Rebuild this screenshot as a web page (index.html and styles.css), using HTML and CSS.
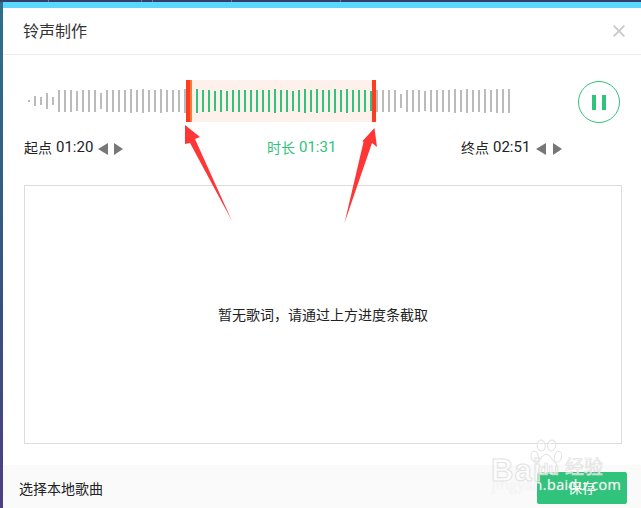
FILE: index.html
```html
<!DOCTYPE html>
<html lang="zh">
<head>
<meta charset="utf-8">
<title>铃声制作</title>
<link rel="stylesheet" href="styles.css">
</head>
<body>
<div class="topline"><i class="tick t1"></i><i class="tick t2"></i><i class="tick t3"></i><i class="tick t4"></i><i class="tick t5"></i></div>
<div class="shell">
  <div class="cyan"></div>
  <main class="dialog">
    <header class="head">
      <h1 class="title">铃声制作</h1>
      <svg class="close" width="12" height="12" viewBox="0 0 12 12"><path d="M.7.7l10.6 10.6M11.3.7L.7 11.3" stroke="#c9c9c9" stroke-width="1.8" fill="none"/></svg>
    </header>
    <section class="player">
      <div class="wave">
        <div class="bars">
          <i class="b h2"></i><i class="b h10"></i><i class="b h8"></i><i class="b h16"></i><i class="b h8"></i><i class="b h22"></i><i class="b h22"></i><i class="b h22"></i><i class="b h20"></i><i class="b h22"></i><i class="b h22"></i><i class="b h22"></i><i class="b h16"></i><i class="b h22"></i><i class="b h22"></i><i class="b h22"></i><i class="b h22"></i><i class="b h24"></i><i class="b h22"></i><i class="b h24"></i><i class="b h22"></i><i class="b h22"></i><i class="b h24"></i><i class="b h22"></i><i class="b h22"></i><i class="b h22"></i><i class="b h24"></i>
        </div>
        <div class="marker start"></div>
        <div class="sel bars">
          <i class="b h24"></i><i class="b h22"></i><i class="b h22"></i><i class="b h20"></i><i class="b h22"></i><i class="b h20"></i><i class="b h22"></i><i class="b h22"></i><i class="b h22"></i><i class="b h22"></i><i class="b h22"></i><i class="b h22"></i><i class="b h22"></i><i class="b h24"></i><i class="b h22"></i><i class="b h22"></i><i class="b h20"></i><i class="b h22"></i><i class="b h24"></i><i class="b h22"></i><i class="b h24"></i><i class="b h22"></i><i class="b h22"></i><i class="b h24"></i><i class="b h22"></i><i class="b h24"></i><i class="b h22"></i><i class="b h22"></i><i class="b h22"></i><i class="b h20"></i>
        </div>
        <div class="marker end"></div>
        <div class="bars">
          <i class="b h22"></i><i class="b h22"></i><i class="b h22"></i><i class="b h22"></i><i class="b h14"></i><i class="b h22"></i><i class="b h22"></i><i class="b h22"></i><i class="b h20"></i><i class="b h22"></i><i class="b h22"></i><i class="b h22"></i><i class="b h22"></i><i class="b h24"></i><i class="b h22"></i><i class="b h24"></i><i class="b h22"></i><i class="b h22"></i><i class="b h24"></i><i class="b h22"></i><i class="b h24"></i><i class="b h24"></i><i class="b h24"></i>
        </div>
      </div>
      <button class="pause" type="button" aria-label="暂停"><i></i><i></i></button>
    </section>
    <section class="times">
      <div class="time t-start"><span class="cn">起点</span> <span class="num">01:20</span><i class="tri left"></i><i class="tri right"></i></div>
      <div class="time t-dur"><span class="cn">时长</span> <span class="num">01:31</span></div>
      <div class="time t-end"><span class="cn">终点</span> <span class="num">02:51</span><i class="tri left"></i><i class="tri right"></i></div>
    </section>
    <section class="lyrics">暂无歌词，请通过上方进度条截取</section>
    <footer class="foot">
      <span class="local">选择本地歌曲</span>
      <button class="save" type="button">保存</button>
    </footer>
  </main>
</div>
<svg class="arrows" width="641" height="508" viewBox="0 0 641 508">
  <polygon points="185,125 200,137 195,139 232,221 190,143 185,144" fill="#ff3636"/>
  <polygon points="374.5,128 377,147 372,143 344.5,223 363.5,142 362.5,141" fill="#ff3636"/>
</svg>
<div class="mark">
  <svg class="paw" width="32" height="37" viewBox="0 0 40 46" fill="rgba(255,255,255,.3)" stroke="#e2e2e2" stroke-width="1.3">
    <ellipse cx="6" cy="22" rx="4.5" ry="7" transform="rotate(-15 6 22)"/>
    <ellipse cx="14" cy="8" rx="5" ry="7" transform="rotate(-8 14 8)"/>
    <ellipse cx="27" cy="8" rx="5" ry="7" transform="rotate(8 27 8)"/>
    <ellipse cx="35" cy="22" rx="4.5" ry="7" transform="rotate(15 35 22)"/>
    <path d="M20 19c-5 0-6 6-10 10-4 3-4 14 4 14 3 0 4-1 6-1s4 1 7 1c8 0 8-11 4-14-4-4-6-10-11-10z"/>
  </svg>
  <span class="m-bai">Bai</span>
  <span class="m-du">du</span>
  <span class="m-cn">经验</span>
  <span class="m-url">jingyan.baidu.com</span>
</div>
</body>
</html>
```
FILE: styles.css
```css
* { box-sizing: border-box; }
html, body { margin: 0; padding: 0; }
body {
  width: 641px;
  height: 508px;
  overflow: hidden;
  position: relative;
  display: flex;
  flex-direction: column;
  background: linear-gradient(180deg, #2f6f8c 0%, #37527f 60%, #4d3f80 100%);
  font-family: "Noto Sans CJK SC", "Noto Sans", sans-serif;
  font-size: 14px;
  color: #222;
}
.topline { height: 2px; background: #33416a; position: relative; flex: none; }
.tick { position: absolute; top: 0; width: 1px; height: 2px; background: #6b7796; }
.t1 { left: 48px; } .t2 { left: 141px; } .t3 { left: 152px; } .t4 { left: 231px; } .t5 { left: 340px; }
.shell { flex: 1; margin-left: 3px; display: flex; flex-direction: column; min-height: 0; }
.cyan { height: 6px; background: #5ad8ff; flex: none; }
.dialog { flex: 1; background: #fff; display: flex; flex-direction: column; min-height: 0; }

.head {
  height: 47px;
  flex: none;
  border-bottom: 1px solid #ededed;
  display: flex;
  align-items: center;
  justify-content: space-between;
  padding: 0 16px 0 20px;
}
.title { margin: 0 0 2px; font-size: 16px; font-weight: 400; line-height: 44px; color: #333; }
.close { display: block; margin-bottom: 1px; }

.player {
  margin-top: 25px;
  padding: 0 21px 0 25px;
  display: flex;
  justify-content: space-between;
  flex: none;
}
.wave { display: flex; height: 42px; }
.bars { display: flex; align-items: center; gap: 4px; flex: none; }
.b { display: block; width: 2px; background: #bbb; flex: none; }
.h2 { height: 2px; } .h8 { height: 8px; } .h10 { height: 10px; } .h14 { height: 14px; }
.h16 { height: 16px; } .h20 { height: 20px; } .h22 { height: 22px; } .h24 { height: 24px; }
.marker { height: 42px; flex: none; }
.marker.start { width: 6px; background: linear-gradient(90deg, #ff3c1f 0, #ff3c1f 4px, #ff7a35 4px); }
.marker.end { width: 4px; background: #ff3c1f; }
.sel { width: 180px; height: 42px; padding-left: 4px; background: #fef0ea; overflow: hidden; }
.sel .b { background: #31c27c; }
.pause {
  width: 42px;
  height: 42px;
  margin-top: 1px;
  padding: 0;
  border: 1px solid #31c27c;
  border-radius: 50%;
  background: #fff;
  display: flex;
  align-items: center;
  justify-content: center;
  gap: 6px;
}
.pause i { display: block; width: 4px; height: 15px; background: #31c27c; }

.times { margin-top: 13px; padding-left: 21px; height: 22px; display: flex; align-items: center; flex: none; }
.time { display: flex; align-items: center; white-space: pre; line-height: 22px; }
.t-start { width: 243px; }
.t-dur { width: 194px; color: #31c27c; }
.num { font-family: Roboto, "Noto Sans", sans-serif; font-size: 15px; margin-left: 4px; }
.tri { display: block; width: 0; height: 0; border-top: 6.5px solid transparent; border-bottom: 6.5px solid transparent; }
.tri.left { border-right: 10px solid #777; margin-left: 5px; margin-top: 3px; }
.tri.right { border-left: 9px solid #777; margin-left: 7px; margin-top: 3px; }
.t-start .tri.right { margin-left: 6px; }
.t-end .tri.left { margin-left: 6px; }

.lyrics {
  margin: 27px 19px 0 21px;
  height: 259px;
  padding-bottom: 2px;
  flex: none;
  border: 1px solid #dcdcdc;
  display: flex;
  align-items: center;
  justify-content: center;
}
.foot {
  margin-top: 21px;
  flex: 1;
  background: #fafafa;
  display: flex;
  align-items: flex-start;
  justify-content: space-between;
  padding: 7px 14px 0 16px;
}
.local { line-height: 32px; }
.save {
  width: 90px;
  height: 32px;
  padding: 0 0 2px;
  border: 0;
  border-radius: 2px;
  background: #31c27c;
  color: #fff;
  font: inherit;
}

.arrows { position: absolute; left: 0; top: 0; pointer-events: none; }
.mark { position: absolute; left: 490px; top: 436px; width: 120px; height: 62px; pointer-events: none; }
.mark span { position: absolute; white-space: nowrap; color: rgba(255,255,255,.6); font-family: "Liberation Sans", sans-serif; line-height: 1; }
.paw { position: absolute; left: 40px; top: 3px; }
.m-bai { left: 1px; top: 19px; font-size: 31px; font-weight: 700; -webkit-text-stroke: 1px #e2e2e2; letter-spacing: 1px; }
.m-du { left: 48px; top: 25px; font-size: 17px; font-weight: 700; -webkit-text-stroke: .7px #dcdcdc; }
.mark .m-cn { left: 75px; top: 20px; font-family: "Noto Sans CJK SC", sans-serif; font-size: 19px; -webkit-text-stroke: .7px #e0e0e0; }
.mark .m-url { left: 2px; top: 42px; font-family: "Open Sans", sans-serif; font-size: 14.5px; letter-spacing: .35px; color: rgba(255,255,255,.75); text-shadow: 0 0 1px #e0e0e0; }
```
